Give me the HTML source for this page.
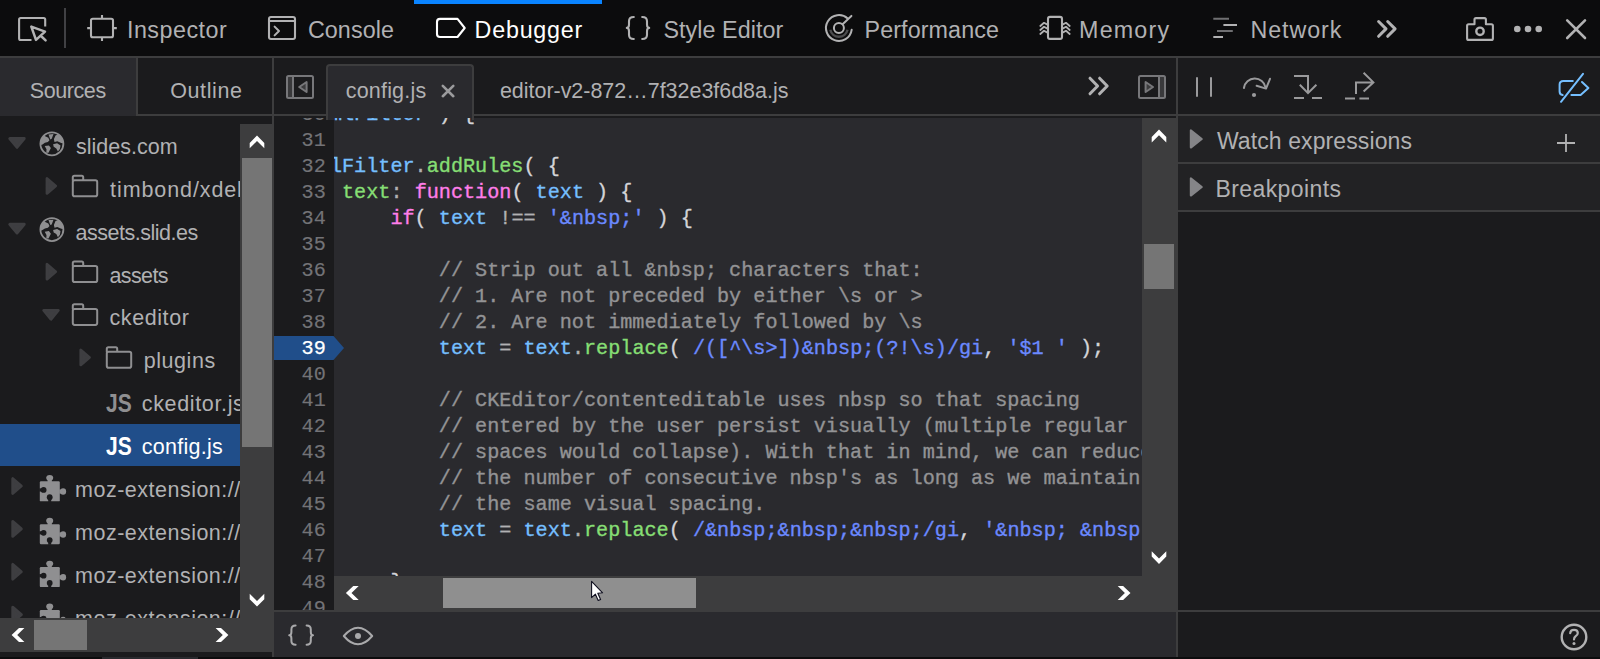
<!DOCTYPE html>
<html><head><meta charset="utf-8"><title>Debugger</title><style>
html,body{margin:0;padding:0;}
body{width:1600px;height:659px;position:relative;overflow:hidden;background:#1b1b1d;font-family:"Liberation Sans",sans-serif;}
.r{position:absolute;box-sizing:content-box;}
.t{position:absolute;white-space:pre;line-height:normal;font-family:"Liberation Sans",sans-serif;}
.m{position:absolute;white-space:pre;line-height:normal;font-family:"Liberation Mono",monospace;font-size:20.16px;-webkit-text-stroke:0.35px currentColor;}
</style></head><body>
<div class="r" style="left:0px;top:0px;width:1600px;height:56px;background:#0c0c0d;"></div>
<div class="r" style="left:0px;top:56px;width:1600px;height:2px;background:#3d3d3e;"></div>
<div class="r" style="left:414px;top:0px;width:188px;height:4px;background:#0a84ff;"></div>
<div class="r" style="left:64px;top:8px;width:2px;height:40px;background:#414144;"></div>
<div class="t " style="left:126.90px;top:17.03px;font-size:23.3px;color:#b1b1b3;letter-spacing:0.512px;">Inspector</div>
<div class="t " style="left:307.90px;top:17.03px;font-size:23.3px;color:#b1b1b3;letter-spacing:0.100px;">Console</div>
<div class="t " style="left:474.60px;top:17.03px;font-size:23.3px;color:#ffffff;letter-spacing:0.771px;">Debugger</div>
<div class="t " style="left:663.40px;top:17.03px;font-size:23.3px;color:#b1b1b3;letter-spacing:0.073px;">Style Editor</div>
<div class="t " style="left:864.50px;top:17.03px;font-size:23.3px;color:#b1b1b3;letter-spacing:0.110px;">Performance</div>
<div class="t " style="left:1079.10px;top:17.03px;font-size:23.3px;color:#b1b1b3;letter-spacing:1.160px;">Memory</div>
<div class="t " style="left:1250.40px;top:17.03px;font-size:23.3px;color:#b1b1b3;letter-spacing:0.917px;">Network</div>
<div class="r" style="left:0px;top:58px;width:1600px;height:58px;background:#1b1b1d;"></div>
<div class="r" style="left:0px;top:58px;width:136px;height:58px;background:#2a2a2e;"></div>
<div class="r" style="left:136px;top:58px;width:2px;height:58px;background:#3d3d3e;"></div>
<div class="r" style="left:138px;top:114px;width:1462px;height:2px;background:#3d3d3e;"></div>
<div class="t " style="left:29.70px;top:78.79px;font-size:21.5px;color:#b1b1b3;letter-spacing:-0.400px;">Sources</div>
<div class="t " style="left:170.20px;top:78.79px;font-size:21.5px;color:#b1b1b3;letter-spacing:0.617px;">Outline</div>
<div class="r" style="left:0px;top:116px;width:272px;height:541px;background:#1b1b1d;"></div>
<div class="r" style="left:0px;top:424px;width:240px;height:42px;background:#204e8a;"></div>
<div class="r" style="left:0px;top:116px;width:240px;height:502px;overflow:hidden;"><div class="t " style="left:75.90px;top:18.99px;font-size:21.5px;color:#b1b1b3;letter-spacing:0.022px;">slides.com</div></div>
<div class="r" style="left:0px;top:116px;width:240px;height:502px;overflow:hidden;"><div class="t " style="left:110.10px;top:61.86px;font-size:21.5px;color:#b1b1b3;letter-spacing:0.900px;">timbond/xdel</div></div>
<div class="r" style="left:0px;top:116px;width:240px;height:502px;overflow:hidden;"><div class="t " style="left:75.60px;top:104.73px;font-size:21.5px;color:#b1b1b3;letter-spacing:-0.492px;">assets.slid.es</div></div>
<div class="r" style="left:0px;top:116px;width:240px;height:502px;overflow:hidden;"><div class="t " style="left:109.50px;top:147.60px;font-size:21.5px;color:#b1b1b3;letter-spacing:-0.620px;">assets</div></div>
<div class="r" style="left:0px;top:116px;width:240px;height:502px;overflow:hidden;"><div class="t " style="left:109.50px;top:190.47px;font-size:21.5px;color:#b1b1b3;letter-spacing:0.586px;">ckeditor</div></div>
<div class="r" style="left:0px;top:116px;width:240px;height:502px;overflow:hidden;"><div class="t " style="left:143.70px;top:233.34px;font-size:21.5px;color:#b1b1b3;letter-spacing:0.567px;">plugins</div></div>
<div class="r" style="left:0px;top:116px;width:240px;height:502px;overflow:hidden;"><div class="t " style="left:141.80px;top:276.21px;font-size:21.5px;color:#b1b1b3;letter-spacing:0.640px;">ckeditor.js</div></div>
<div class="r" style="left:0px;top:116px;width:240px;height:502px;overflow:hidden;"><div class="t " style="left:141.80px;top:319.08px;font-size:21.5px;color:#ffffff;letter-spacing:0.263px;">config.js</div></div>
<div class="r" style="left:0px;top:116px;width:240px;height:502px;overflow:hidden;"><div class="t " style="left:75.10px;top:361.95px;font-size:21.5px;color:#b1b1b3;letter-spacing:0.493px;">moz-extension://</div></div>
<div class="r" style="left:0px;top:116px;width:240px;height:502px;overflow:hidden;"><div class="t " style="left:75.10px;top:404.82px;font-size:21.5px;color:#b1b1b3;letter-spacing:0.493px;">moz-extension://</div></div>
<div class="r" style="left:0px;top:116px;width:240px;height:502px;overflow:hidden;"><div class="t " style="left:75.10px;top:447.69px;font-size:21.5px;color:#b1b1b3;letter-spacing:0.493px;">moz-extension://</div></div>
<div class="r" style="left:0px;top:116px;width:240px;height:502px;overflow:hidden;"><div class="t " style="left:75.10px;top:490.56px;font-size:21.5px;color:#b1b1b3;letter-spacing:0.493px;">moz-extension://</div></div>
<div class="t" style="left:106.28px;top:388.16px;font-size:26.3px;font-weight:bold;color:#8f8f91;transform:scaleX(0.7987);transform-origin:0 0;">JS</div>
<div class="t" style="left:106.28px;top:431.03px;font-size:26.3px;font-weight:bold;color:#ffffff;transform:scaleX(0.7987);transform-origin:0 0;">JS</div>
<div class="r" style="left:240px;top:124px;width:34px;height:494px;background:#3d3d3e;"></div>
<div class="r" style="left:242px;top:158px;width:30px;height:289px;background:#757575;"></div>
<div class="r" style="left:0px;top:618px;width:274px;height:34px;background:#3d3d3e;"></div>
<div class="r" style="left:34px;top:620px;width:53px;height:30px;background:#757575;"></div>
<div class="r" style="left:272px;top:58px;width:2px;height:66px;background:#3d3d3e;"></div>
<div class="r" style="left:272px;top:652px;width:2px;height:5px;background:#3d3d3e;"></div>
<div class="r" style="left:1176px;top:58px;width:2px;height:599px;background:#3d3d3e;"></div>
<div class="r" style="left:274px;top:116px;width:902px;height:2px;background:#1b1b1d;"></div>
<div class="r" style="left:274px;top:118px;width:60px;height:492px;background:#1b1b1d;"></div>
<div class="r" style="left:334px;top:118px;width:808px;height:458px;background:#2a2a2e;"></div>
<div class="r" style="left:1142px;top:118px;width:36px;height:492px;background:#3d3d3e;"></div>
<div class="r" style="left:334px;top:576px;width:808px;height:34px;background:#3d3d3e;"></div>
<div class="r" style="left:274px;top:610px;width:902px;height:2px;background:#3d3d3e;"></div>
<div class="r" style="left:274px;top:612px;width:902px;height:45px;background:#2a2a2e;"></div>
<div class="r" style="left:1144px;top:244px;width:30px;height:45px;background:#757575;"></div>
<div class="r" style="left:443px;top:578px;width:253px;height:30px;background:#8f8f8f;"></div>
<div class="r" style="left:326px;top:64px;width:144px;height:54px;background:#2a2a2e;border:2px solid #3d3d3e;border-bottom:none;border-radius:4px 4px 0 0;"></div>
<div class="t " style="left:345.70px;top:78.79px;font-size:21.5px;color:#b1b1b3;letter-spacing:0.200px;">config.js</div>
<div class="t " style="left:499.90px;top:78.79px;font-size:21.5px;color:#b1b1b3;letter-spacing:-0.026px;">editor-v2-872…7f32e3f6d8a.js</div>
<div class="r" style="left:1178px;top:116px;width:422px;height:46px;background:#222224;"></div>
<div class="r" style="left:1178px;top:162px;width:422px;height:2px;background:#3d3d3e;"></div>
<div class="r" style="left:1178px;top:164px;width:422px;height:46px;background:#222224;"></div>
<div class="r" style="left:1178px;top:210px;width:422px;height:2px;background:#3d3d3e;"></div>
<div class="r" style="left:1178px;top:212px;width:422px;height:398px;background:#1b1b1d;"></div>
<div class="r" style="left:1178px;top:610px;width:422px;height:2px;background:#3d3d3e;"></div>
<div class="r" style="left:1178px;top:612px;width:422px;height:45px;background:#1b1b1d;"></div>
<div class="t " style="left:1216.90px;top:128.41px;font-size:23px;color:#b1b1b3;letter-spacing:0.100px;">Watch expressions</div>
<div class="t " style="left:1215.50px;top:176.31px;font-size:23px;color:#b1b1b3;letter-spacing:0.400px;">Breakpoints</div>
<div class="r" style="left:0px;top:657px;width:1600px;height:2px;background:#0c0c0d;"></div>
<div class="r" style="left:102px;top:657px;width:96px;height:2px;background:#2a2a2e;"></div>
<div class="r" style="left:334px;top:118px;width:808px;height:458px;overflow:hidden;">
<div class="m" style="left:-28.28px;top:-16.38px;line-height:26px;"><span style="color:#75bfff">htmlFilter</span><span style="color:#d4d4d8"> ) {</span></div>
<div class="m" style="left:-40.38px;top:35.62px;line-height:26px;"><span style="color:#75bfff">htmlFilter</span><span style="color:#b1b1b3">.</span><span style="color:#86de74">addRules</span><span style="color:#d4d4d8">( {</span></div>
<div class="m" style="left:8.02px;top:61.62px;line-height:26px;"><span style="color:#86de74">text</span><span style="color:#b1b1b3">:</span><span style="color:#d4d4d8"> </span><span style="color:#ff7de9">function</span><span style="color:#d4d4d8">( </span><span style="color:#75bfff">text</span><span style="color:#d4d4d8"> ) {</span></div>
<div class="m" style="left:56.41px;top:87.62px;line-height:26px;"><span style="color:#ff7de9">if</span><span style="color:#d4d4d8">( </span><span style="color:#75bfff">text</span><span style="color:#d4d4d8"> </span><span style="color:#b1b1b3">!==</span><span style="color:#d4d4d8"> </span><span style="color:#6b89ff">'&amp;nbsp;'</span><span style="color:#d4d4d8"> ) {</span></div>
<div class="m" style="left:104.80px;top:139.62px;line-height:26px;"><span style="color:#939395">// Strip out all &amp;nbsp; characters that:</span></div>
<div class="m" style="left:104.80px;top:165.62px;line-height:26px;"><span style="color:#939395">// 1. Are not preceded by either \s or &gt;</span></div>
<div class="m" style="left:104.80px;top:191.62px;line-height:26px;"><span style="color:#939395">// 2. Are not immediately followed by \s</span></div>
<div class="m" style="left:104.80px;top:217.62px;line-height:26px;"><span style="color:#75bfff">text</span><span style="color:#d4d4d8"> </span><span style="color:#b1b1b3">=</span><span style="color:#d4d4d8"> </span><span style="color:#75bfff">text</span><span style="color:#b1b1b3">.</span><span style="color:#86de74">replace</span><span style="color:#d4d4d8">( </span><span style="color:#6b89ff">/([^\s&gt;])&amp;nbsp;(?!\s)/gi</span><span style="color:#d4d4d8">,</span><span style="color:#d4d4d8"> </span><span style="color:#6b89ff">'$1 '</span><span style="color:#d4d4d8"> );</span></div>
<div class="m" style="left:104.80px;top:269.62px;line-height:26px;"><span style="color:#939395">// CKEditor/contenteditable uses nbsp so that spacing</span></div>
<div class="m" style="left:104.80px;top:295.62px;line-height:26px;"><span style="color:#939395">// entered by the user persist visually (multiple regular</span></div>
<div class="m" style="left:104.80px;top:321.62px;line-height:26px;"><span style="color:#939395">// spaces would collapse). With that in mind, we can reduce</span></div>
<div class="m" style="left:104.80px;top:347.62px;line-height:26px;"><span style="color:#939395">// the number of consecutive nbsp's as long as we maintain</span></div>
<div class="m" style="left:104.80px;top:373.62px;line-height:26px;"><span style="color:#939395">// the same visual spacing.</span></div>
<div class="m" style="left:104.80px;top:399.62px;line-height:26px;"><span style="color:#75bfff">text</span><span style="color:#d4d4d8"> </span><span style="color:#b1b1b3">=</span><span style="color:#d4d4d8"> </span><span style="color:#75bfff">text</span><span style="color:#b1b1b3">.</span><span style="color:#86de74">replace</span><span style="color:#d4d4d8">( </span><span style="color:#6b89ff">/&amp;nbsp;&amp;nbsp;&amp;nbsp;/gi</span><span style="color:#d4d4d8">,</span><span style="color:#d4d4d8"> </span><span style="color:#6b89ff">'&amp;nbsp; &amp;nbsp;'</span><span style="color:#d4d4d8"> );</span></div>
<div class="m" style="left:56.41px;top:451.62px;line-height:26px;"><span style="color:#d4d4d8">}</span></div>
</div>
<svg class="r" style="left:274px;top:336px;" width="72" height="24" viewBox="0 0 72 24"><path d="M0 0H59.5L70 12L59.5 24H0Z" fill="#204e8a"/></svg>
<div class="r" style="left:274px;top:118px;width:60px;height:492px;overflow:hidden;">
<div class="m" style="left:27.60px;top:-16.38px;line-height:26px;color:#737377;-webkit-text-stroke:0.15px currentColor;">30</div>
<div class="m" style="left:27.60px;top:9.62px;line-height:26px;color:#737377;-webkit-text-stroke:0.15px currentColor;">31</div>
<div class="m" style="left:27.60px;top:35.62px;line-height:26px;color:#737377;-webkit-text-stroke:0.15px currentColor;">32</div>
<div class="m" style="left:27.60px;top:61.62px;line-height:26px;color:#737377;-webkit-text-stroke:0.15px currentColor;">33</div>
<div class="m" style="left:27.60px;top:87.62px;line-height:26px;color:#737377;-webkit-text-stroke:0.15px currentColor;">34</div>
<div class="m" style="left:27.60px;top:113.62px;line-height:26px;color:#737377;-webkit-text-stroke:0.15px currentColor;">35</div>
<div class="m" style="left:27.60px;top:139.62px;line-height:26px;color:#737377;-webkit-text-stroke:0.15px currentColor;">36</div>
<div class="m" style="left:27.60px;top:165.62px;line-height:26px;color:#737377;-webkit-text-stroke:0.15px currentColor;">37</div>
<div class="m" style="left:27.60px;top:191.62px;line-height:26px;color:#737377;-webkit-text-stroke:0.15px currentColor;">38</div>
<div class="m" style="left:27.60px;top:217.62px;line-height:26px;color:#ffffff;-webkit-text-stroke:0.25px #fff;">39</div>
<div class="m" style="left:27.60px;top:243.62px;line-height:26px;color:#737377;-webkit-text-stroke:0.15px currentColor;">40</div>
<div class="m" style="left:27.60px;top:269.62px;line-height:26px;color:#737377;-webkit-text-stroke:0.15px currentColor;">41</div>
<div class="m" style="left:27.60px;top:295.62px;line-height:26px;color:#737377;-webkit-text-stroke:0.15px currentColor;">42</div>
<div class="m" style="left:27.60px;top:321.62px;line-height:26px;color:#737377;-webkit-text-stroke:0.15px currentColor;">43</div>
<div class="m" style="left:27.60px;top:347.62px;line-height:26px;color:#737377;-webkit-text-stroke:0.15px currentColor;">44</div>
<div class="m" style="left:27.60px;top:373.62px;line-height:26px;color:#737377;-webkit-text-stroke:0.15px currentColor;">45</div>
<div class="m" style="left:27.60px;top:399.62px;line-height:26px;color:#737377;-webkit-text-stroke:0.15px currentColor;">46</div>
<div class="m" style="left:27.60px;top:425.62px;line-height:26px;color:#737377;-webkit-text-stroke:0.15px currentColor;">47</div>
<div class="m" style="left:27.60px;top:451.62px;line-height:26px;color:#737377;-webkit-text-stroke:0.15px currentColor;">48</div>
<div class="m" style="left:27.60px;top:477.62px;line-height:26px;color:#737377;-webkit-text-stroke:0.15px currentColor;">49</div>
</div>
<svg class="r" style="left:14px;top:10px;" width="40" height="38" viewBox="14 10 40 38"><path d="M31.5 40H20.6Q19.1 40 19.1 38.5V19.5Q19.1 18 20.6 18H43.7Q45.2 18 45.2 19.5V26.5" stroke="#b2b2b3" stroke-width="2.1" fill="none" stroke-linecap="butt" stroke-linejoin="round"/><path d="M31.3 26.6L45 31.6L36 39.8Z M41 36L45.6 40.4" stroke="#b2b2b3" stroke-width="2.5" fill="none" stroke-linecap="round" stroke-linejoin="round"/></svg>
<svg class="r" style="left:84px;top:12px;" width="36" height="32" viewBox="84 12 36 32"><rect x="91" y="18.8" width="22" height="18.4" rx="1.8" fill="none" stroke="#b2b2b3" stroke-width="2.1"/><path d="M102 15V18.5M102 37.5V41M87.2 28.1H90.5M113.5 28.1H116.8" stroke="#b2b2b3" stroke-width="2.1" fill="none" stroke-linecap="butt" stroke-linejoin="round"/></svg>
<svg class="r" style="left:264px;top:12px;" width="36" height="32" viewBox="264 12 36 32"><rect x="269" y="17" width="26" height="22" rx="2" fill="none" stroke="#b2b2b3" stroke-width="2.1"/><path d="M269 21H295" stroke="#b2b2b3" stroke-width="2" fill="none" stroke-linecap="butt" stroke-linejoin="round"/><path d="M274.6 26.6L279 31L274.6 35.4" stroke="#b2b2b3" stroke-width="2" fill="none" stroke-linecap="round" stroke-linejoin="round"/></svg>
<svg class="r" style="left:432px;top:14px;" width="38" height="28" viewBox="432 14 38 28"><path d="M440 18.9H457.5L464.7 28L457.5 37H440Q437 37 437 34V21.9Q437 18.9 440 18.9Z" stroke="#ffffff" stroke-width="2.1" fill="none" stroke-linecap="round" stroke-linejoin="round"/></svg>
<svg class="r" style="left:622px;top:12px;" width="32" height="32" viewBox="622 12 32 32"><path d="M633.8 17Q629 17 629 21.3V24.6Q629 27.9 626.8 27.9Q629 27.9 629 31.4V34.7Q629 39 633.8 39" stroke="#b2b2b3" stroke-width="2.1" fill="none" stroke-linecap="round" stroke-linejoin="round"/><path d="M642.2 17Q647 17 647 21.3V24.6Q647 27.9 649.2 27.9Q647 27.9 647 31.4V34.7Q647 39 642.2 39" stroke="#b2b2b3" stroke-width="2.1" fill="none" stroke-linecap="round" stroke-linejoin="round"/></svg>
<svg class="r" style="left:822px;top:10px;" width="36" height="36" viewBox="822 10 36 36"><path d="M847.51 29.83A8.8 8.8 0 0 1 830.29 29.83" stroke="#4b4b4d" stroke-width="2.4" fill="none" stroke-linecap="butt" stroke-linejoin="round"/><path d="M847.70 18.57A12.9 12.9 0 1 0 851.67 29.80" stroke="#b2b2b3" stroke-width="2" fill="none" stroke-linecap="round" stroke-linejoin="round"/><circle cx="838.9" cy="28.0" r="5" fill="#0c0c0d" stroke="#b2b2b3" stroke-width="2"/><path d="M842.6 24.2L851.4 15.9" stroke="#b2b2b3" stroke-width="2" fill="none" stroke-linecap="round" stroke-linejoin="round"/></svg>
<svg class="r" style="left:1036px;top:12px;" width="38" height="32" viewBox="1036 12 38 32"><path d="M1040.3 26L1044 22.8L1047 24.4M1069.7 26L1066 22.8L1063 24.4M1040.3 30L1044 26.8L1047 28.4M1069.7 30L1066 26.8L1063 28.4M1040.3 34L1044 30.8L1047 32.4M1069.7 34L1066 30.8L1063 32.4" stroke="#b2b2b3" stroke-width="1.8" fill="none" stroke-linecap="round" stroke-linejoin="round"/><rect x="1048" y="16.9" width="14" height="22" rx="2" fill="#0c0c0d" stroke="#b2b2b3" stroke-width="2.1"/></svg>
<svg class="r" style="left:1210px;top:14px;" width="30" height="28" viewBox="1210 14 30 28"><path d="M1213.3 18.8H1229M1217 31H1232.8" stroke="#6f6f71" stroke-width="2" fill="none" stroke-linecap="butt" stroke-linejoin="round"/><path d="M1223.4 25H1237M1213.3 37H1223" stroke="#b2b2b3" stroke-width="2" fill="none" stroke-linecap="butt" stroke-linejoin="round"/></svg>
<svg class="r" style="left:1374px;top:16px;" width="26" height="26" viewBox="1374 16 26 26"><path d="M1378.6 21.5L1386 28.9L1378.6 36.3M1387.7 21.5L1395.1 28.9L1387.7 36.3" stroke="#b2b2b3" stroke-width="3" fill="none" stroke-linecap="round" stroke-linejoin="round"/></svg>
<svg class="r" style="left:1462px;top:13px;" width="36" height="32" viewBox="1462 13 36 32"><path d="M1474.5 24.2V19.6Q1474.5 18.1 1476 18.1H1484.4Q1485.9 18.1 1485.9 19.6V24.2H1491.4Q1492.9 24.2 1492.9 25.7V38.4Q1492.9 39.9 1491.4 39.9H1468.6Q1467.1 39.9 1467.1 38.4V25.7Q1467.1 24.2 1468.6 24.2Z" stroke="#b2b2b3" stroke-width="2.1" fill="none" stroke-linecap="round" stroke-linejoin="round"/><circle cx="1480" cy="31.3" r="3.7" fill="none" stroke="#b2b2b3" stroke-width="2.4"/></svg>
<svg class="r" style="left:1510px;top:22px;" width="34" height="14" viewBox="1510 22 34 14"><circle cx="1517.3" cy="29" r="3.3" fill="#b2b2b3"/><circle cx="1528" cy="29" r="3.3" fill="#b2b2b3"/><circle cx="1538.7" cy="29" r="3.3" fill="#b2b2b3"/></svg>
<svg class="r" style="left:1562px;top:16px;" width="28" height="26" viewBox="1562 16 28 26"><path d="M1567.2 20.4L1585 38M1585 20.4L1567.2 38" stroke="#b2b2b3" stroke-width="2.6" fill="none" stroke-linecap="round" stroke-linejoin="round"/></svg>
<svg class="r" style="left:284px;top:73px;" width="32" height="28" viewBox="284 73 32 28"><rect x="288" y="77" width="5" height="20" fill="#39393b"/><rect x="287" y="76" width="26" height="22" rx="1.5" fill="none" stroke="#77777a" stroke-width="2"/><path d="M293 76V98" stroke="#77777a" stroke-width="2" fill="none" stroke-linecap="butt" stroke-linejoin="round"/><path d="M299.2 87L306.6 82V92Z" stroke="#77777a" stroke-width="2" fill="#3c3c3e" stroke-linecap="round" stroke-linejoin="round"/></svg>
<svg class="r" style="left:438px;top:81px;" width="20" height="20" viewBox="438 81 20 20"><path d="M442.8 85.9L453.3 96.2M453.3 85.9L442.8 96.2" stroke="#9b9b9d" stroke-width="2.6" fill="none" stroke-linecap="round" stroke-linejoin="round"/></svg>
<svg class="r" style="left:1085px;top:73px;" width="28" height="26" viewBox="1085 73 28 26"><path d="M1090 78.2L1097.6 86L1090 93.8M1099.6 78.2L1107.2 86L1099.6 93.8" stroke="#b2b2b3" stroke-width="3" fill="none" stroke-linecap="round" stroke-linejoin="round"/></svg>
<svg class="r" style="left:1135px;top:73px;" width="34" height="28" viewBox="1135 73 34 28"><rect x="1160" y="77" width="5" height="20" fill="#39393b"/><rect x="1139" y="76" width="26" height="22" rx="1.5" fill="none" stroke="#77777a" stroke-width="2"/><path d="M1159 76V98" stroke="#77777a" stroke-width="2" fill="none" stroke-linecap="butt" stroke-linejoin="round"/><path d="M1153 87L1145.6 82V92Z" stroke="#77777a" stroke-width="2" fill="#3c3c3e" stroke-linecap="round" stroke-linejoin="round"/></svg>
<svg class="r" style="left:1192px;top:74px;" width="24" height="26" viewBox="1192 74 24 26"><path d="M1197 78V96M1211 78V96" stroke="#9a9a9c" stroke-width="2" fill="none" stroke-linecap="round" stroke-linejoin="round"/></svg>
<svg class="r" style="left:1240px;top:72px;" width="34" height="30" viewBox="1240 72 34 30"><path d="M1243.9 88A11 11 0 0 1 1265.6 87.6" stroke="#9a9a9c" stroke-width="2" fill="none" stroke-linecap="round" stroke-linejoin="round"/><path d="M1256.6 85.8L1266 88.6L1270 78.8" stroke="#9a9a9c" stroke-width="2" fill="none" stroke-linecap="round" stroke-linejoin="round"/><circle cx="1254" cy="95" r="2.1" fill="#9a9a9c"/></svg>
<svg class="r" style="left:1290px;top:72px;" width="36" height="30" viewBox="1290 72 36 30"><path d="M1294 76H1308V93M1299.8 84.8L1308 93.2L1316.4 84.8" stroke="#9a9a9c" stroke-width="2" fill="none" stroke-linecap="butt" stroke-linejoin="miter"/><path d="M1294 98H1304M1312 98H1322" stroke="#9a9a9c" stroke-width="2" fill="none" stroke-linecap="butt" stroke-linejoin="round"/></svg>
<svg class="r" style="left:1342px;top:68px;" width="36" height="34" viewBox="1342 68 36 34"><path d="M1356 94V82.4H1372M1363.6 72.8L1373.4 82.4L1363.6 91.6" stroke="#9a9a9c" stroke-width="2" fill="none" stroke-linecap="butt" stroke-linejoin="miter"/><path d="M1345 98.6H1355M1359.4 98.6H1369" stroke="#9a9a9c" stroke-width="2" fill="none" stroke-linecap="butt" stroke-linejoin="round"/></svg>
<svg class="r" style="left:1554px;top:70px;" width="40" height="36" viewBox="1554 70 40 36"><path d="M1572.8 81H1563.4Q1559.6 81 1559.6 84.6V91.4Q1559.6 94.6 1562.6 95" stroke="#75bfff" stroke-width="2" fill="none" stroke-linecap="round" stroke-linejoin="round"/><path d="M1571.4 95H1580.6L1588.4 88L1582 82" stroke="#75bfff" stroke-width="2" fill="none" stroke-linecap="round" stroke-linejoin="round"/><path d="M1561 101.8L1583 73.8" stroke="#75bfff" stroke-width="2" fill="none" stroke-linecap="round" stroke-linejoin="round"/></svg>
<svg class="r" style="left:0px;top:116px;" width="240" height="502" viewBox="0 116 240 502"><path d="M9.7 138.50000000000003H24.3L17 147.40000000000003Z" fill="#3e3e41" stroke="#3e3e41" stroke-width="2.8" stroke-linejoin="round"/><clipPath id="gc1"><circle cx="51.9" cy="143.8" r="11.6"/></clipPath><circle cx="51.9" cy="143.8" r="11.5" fill="none" stroke="#8f8f91" stroke-width="1.8"/><path d="M39.9 145.4L39.9 140.8L43.5 135.2L45.7 136.6L48.3 137.8L49.5 140.2L47.9 142.0L44.9 142.8L42.5 144.4Z" fill="#8f8f91" clip-path="url(#gc1)"/><path d="M48.5 134.4L53.5 134.0L51.7 138.8L50.3 139.4Z" fill="#8f8f91" clip-path="url(#gc1)"/><path d="M53.9 139.2L55.5 135.4L58.3 134.2L63.9 137.8L63.9 143.4L61.3 143.0L57.3 141.2L54.5 142.0Z" fill="#8f8f91" clip-path="url(#gc1)"/><path d="M44.7 146.0L48.9 145.4L50.9 148.0L48.5 152.8L46.3 152.8L46.5 149.2Z" fill="#8f8f91" clip-path="url(#gc1)"/><path d="M53.1 144.2L57.1 143.2L60.5 145.4L59.9 149.0L57.9 151.6L56.3 148.4L53.7 146.8Z" fill="#8f8f91" clip-path="url(#gc1)"/><path d="M47.0 178.47V193.47L55.7 185.97Z" fill="#3e3e41" stroke="#3e3e41" stroke-width="2.8" stroke-linejoin="round"/><path d="M72.8 180.67000000000002V177.27Q72.8 175.67000000000002 74.39999999999999 175.67000000000002H81.8Q83.2 175.67000000000002 83.2 177.27V180.27" fill="none" stroke="#8f8f91" stroke-width="2"/><rect x="72.8" y="180.27" width="24.4" height="16" rx="1.8" fill="none" stroke="#8f8f91" stroke-width="2"/><path d="M9.7 224.24000000000004H24.3L17 233.14000000000004Z" fill="#3e3e41" stroke="#3e3e41" stroke-width="2.8" stroke-linejoin="round"/><clipPath id="gc2"><circle cx="51.9" cy="229.54000000000002" r="11.6"/></clipPath><circle cx="51.9" cy="229.54000000000002" r="11.5" fill="none" stroke="#8f8f91" stroke-width="1.8"/><path d="M39.9 231.1L39.9 226.5L43.5 220.9L45.7 222.3L48.3 223.5L49.5 225.9L47.9 227.7L44.9 228.5L42.5 230.1Z" fill="#8f8f91" clip-path="url(#gc2)"/><path d="M48.5 220.1L53.5 219.7L51.7 224.5L50.3 225.1Z" fill="#8f8f91" clip-path="url(#gc2)"/><path d="M53.9 224.9L55.5 221.1L58.3 219.9L63.9 223.5L63.9 229.1L61.3 228.7L57.3 226.9L54.5 227.7Z" fill="#8f8f91" clip-path="url(#gc2)"/><path d="M44.7 231.7L48.9 231.1L50.9 233.7L48.5 238.5L46.3 238.5L46.5 234.9Z" fill="#8f8f91" clip-path="url(#gc2)"/><path d="M53.1 229.9L57.1 228.9L60.5 231.1L59.9 234.7L57.9 237.3L56.3 234.1L53.7 232.5Z" fill="#8f8f91" clip-path="url(#gc2)"/><path d="M47.0 264.21V279.21L55.7 271.71Z" fill="#3e3e41" stroke="#3e3e41" stroke-width="2.8" stroke-linejoin="round"/><path d="M72.8 266.40999999999997V263.01Q72.8 261.40999999999997 74.39999999999999 261.40999999999997H81.8Q83.2 261.40999999999997 83.2 263.01V266.01" fill="none" stroke="#8f8f91" stroke-width="2"/><rect x="72.8" y="266.01" width="24.4" height="16" rx="1.8" fill="none" stroke="#8f8f91" stroke-width="2"/><path d="M43.7 310.37999999999994H58.3L51 319.28Z" fill="#3e3e41" stroke="#3e3e41" stroke-width="2.8" stroke-linejoin="round"/><path d="M72.8 309.28V305.88Q72.8 304.28 74.39999999999999 304.28H81.8Q83.2 304.28 83.2 305.88V308.88" fill="none" stroke="#8f8f91" stroke-width="2"/><rect x="72.8" y="308.88" width="24.4" height="16" rx="1.8" fill="none" stroke="#8f8f91" stroke-width="2"/><path d="M80.80000000000001 349.95V364.95L89.5 357.45Z" fill="#3e3e41" stroke="#3e3e41" stroke-width="2.8" stroke-linejoin="round"/><path d="M106.8 352.15V348.75Q106.8 347.15 108.39999999999999 347.15H115.8Q117.2 347.15 117.2 348.75V351.75" fill="none" stroke="#8f8f91" stroke-width="2"/><rect x="106.8" y="351.75" width="24.4" height="16" rx="1.8" fill="none" stroke="#8f8f91" stroke-width="2"/><path d="M12.700000000000001 478.56V493.56L21.4 486.06Z" fill="#3e3e41" stroke="#3e3e41" stroke-width="2.8" stroke-linejoin="round"/><rect x="39.8" y="481.36" width="20" height="20" rx="1.2" fill="#8f8f91"/><ellipse cx="49.699999999999996" cy="477.86" rx="3.5" ry="2.9" fill="#8f8f91"/><rect x="47.599999999999994" y="478.86" width="4.2" height="3.5" fill="#8f8f91"/><ellipse cx="63.099999999999994" cy="491.56" rx="3" ry="3.3" fill="#8f8f91"/><rect x="59.3" y="489.56" width="3" height="4" fill="#8f8f91"/><circle cx="43.599999999999994" cy="489.96000000000004" r="2.9" fill="#1b1b1d"/><rect x="39.3" y="488.36" width="3" height="3.2" fill="#1b1b1d"/><circle cx="49.699999999999996" cy="497.16" r="2.9" fill="#1b1b1d"/><rect x="48.199999999999996" y="498.86" width="3" height="3" fill="#1b1b1d"/><path d="M12.700000000000001 521.4300000000001V536.4300000000001L21.4 528.9300000000001Z" fill="#3e3e41" stroke="#3e3e41" stroke-width="2.8" stroke-linejoin="round"/><rect x="39.8" y="524.23" width="20" height="20" rx="1.2" fill="#8f8f91"/><ellipse cx="49.699999999999996" cy="520.73" rx="3.5" ry="2.9" fill="#8f8f91"/><rect x="47.599999999999994" y="521.73" width="4.2" height="3.5" fill="#8f8f91"/><ellipse cx="63.099999999999994" cy="534.4300000000001" rx="3" ry="3.3" fill="#8f8f91"/><rect x="59.3" y="532.4300000000001" width="3" height="4" fill="#8f8f91"/><circle cx="43.599999999999994" cy="532.83" r="2.9" fill="#1b1b1d"/><rect x="39.3" y="531.23" width="3" height="3.2" fill="#1b1b1d"/><circle cx="49.699999999999996" cy="540.03" r="2.9" fill="#1b1b1d"/><rect x="48.199999999999996" y="541.73" width="3" height="3" fill="#1b1b1d"/><path d="M12.700000000000001 564.3000000000001V579.3000000000001L21.4 571.8000000000001Z" fill="#3e3e41" stroke="#3e3e41" stroke-width="2.8" stroke-linejoin="round"/><rect x="39.8" y="567.1" width="20" height="20" rx="1.2" fill="#8f8f91"/><ellipse cx="49.699999999999996" cy="563.6" rx="3.5" ry="2.9" fill="#8f8f91"/><rect x="47.599999999999994" y="564.6" width="4.2" height="3.5" fill="#8f8f91"/><ellipse cx="63.099999999999994" cy="577.3000000000001" rx="3" ry="3.3" fill="#8f8f91"/><rect x="59.3" y="575.3000000000001" width="3" height="4" fill="#8f8f91"/><circle cx="43.599999999999994" cy="575.7" r="2.9" fill="#1b1b1d"/><rect x="39.3" y="574.1" width="3" height="3.2" fill="#1b1b1d"/><circle cx="49.699999999999996" cy="582.9" r="2.9" fill="#1b1b1d"/><rect x="48.199999999999996" y="584.6" width="3" height="3" fill="#1b1b1d"/><path d="M12.700000000000001 607.1700000000001V622.1700000000001L21.4 614.6700000000001Z" fill="#3e3e41" stroke="#3e3e41" stroke-width="2.8" stroke-linejoin="round"/><rect x="39.8" y="609.97" width="20" height="20" rx="1.2" fill="#8f8f91"/><ellipse cx="49.699999999999996" cy="606.47" rx="3.5" ry="2.9" fill="#8f8f91"/><rect x="47.599999999999994" y="607.47" width="4.2" height="3.5" fill="#8f8f91"/><ellipse cx="63.099999999999994" cy="620.1700000000001" rx="3" ry="3.3" fill="#8f8f91"/><rect x="59.3" y="618.1700000000001" width="3" height="4" fill="#8f8f91"/><circle cx="43.599999999999994" cy="618.57" r="2.9" fill="#1b1b1d"/><rect x="39.3" y="616.97" width="3" height="3.2" fill="#1b1b1d"/><circle cx="49.699999999999996" cy="625.77" r="2.9" fill="#1b1b1d"/><rect x="48.199999999999996" y="627.47" width="3" height="3" fill="#1b1b1d"/></svg>
<svg class="r" style="left:240px;top:124px;" width="34" height="494" viewBox="240 124 34 494"><path d="M257 135.5L264.3 142.9V148.3L257 141.1L249.7 148.3V142.9Z" fill="#ffffff"/><path d="M257 606.6L264.3 599.2V593.8000000000001L257 601.0L249.7 593.8000000000001V599.2Z" fill="#ffffff"/></svg>
<svg class="r" style="left:0px;top:618px;" width="274" height="34" viewBox="0 618 274 34"><path d="M11.6 635L19.0 627.9H24.4L17.2 635L24.4 642.1H19.0Z" fill="#ffffff"/><path d="M228.4 635L221.0 627.9H215.6L222.8 635L215.6 642.1H221.0Z" fill="#ffffff"/></svg>
<svg class="r" style="left:1142px;top:118px;" width="36" height="458" viewBox="1142 118 36 458"><path d="M1159 129.6L1166.3 137.0V142.4L1159 135.2L1151.7 142.4V137.0Z" fill="#ffffff"/><path d="M1159 564L1166.3 556.6V551.2L1159 558.4L1151.7 551.2V556.6Z" fill="#ffffff"/></svg>
<svg class="r" style="left:334px;top:576px;" width="808" height="34" viewBox="334 576 808 34"><path d="M345.9 593L353.29999999999995 585.9H358.7L351.5 593L358.7 600.1H353.29999999999995Z" fill="#ffffff"/><path d="M1130.5 593L1123.1 585.9H1117.7L1124.9 593L1117.7 600.1H1123.1Z" fill="#ffffff"/></svg>
<svg class="r" style="left:1186px;top:126px;" width="20" height="74" viewBox="1186 126 20 74"><path d="M1190.8 130.4V147.6L1201.8 139Z" fill="#858588" stroke="#858588" stroke-width="2" stroke-linejoin="round"/><path d="M1190.8 178.4V195.6L1201.8 187Z" fill="#858588" stroke="#858588" stroke-width="2" stroke-linejoin="round"/></svg>
<svg class="r" style="left:1554px;top:130px;" width="24" height="24" viewBox="1554 130 24 24"><path d="M1566 134V152M1557 143H1575" stroke="#b2b2b3" stroke-width="1.8" fill="none" stroke-linecap="butt" stroke-linejoin="round"/></svg>
<svg class="r" style="left:284px;top:620px;" width="36" height="30" viewBox="284 620 36 30"><path d="M295.6 625.6Q291.4 625.6 291.4 629.4V632Q291.4 635.2 289.2 635.2Q291.4 635.2 291.4 638.4V641Q291.4 644.8 295.6 644.8" stroke="#a9a9ab" stroke-width="2" fill="none" stroke-linecap="round" stroke-linejoin="round"/><path d="M306.6 625.6Q310.8 625.6 310.8 629.4V632Q310.8 635.2 313 635.2Q310.8 635.2 310.8 638.4V641Q310.8 644.8 306.6 644.8" stroke="#a9a9ab" stroke-width="2" fill="none" stroke-linecap="round" stroke-linejoin="round"/></svg>
<svg class="r" style="left:340px;top:622px;" width="38" height="28" viewBox="340 622 38 28"><path d="M343.8 636Q358 619.4 372.2 636Q358 652.6 343.8 636Z" stroke="#a9a9ab" stroke-width="2" fill="none" stroke-linecap="round" stroke-linejoin="round"/><circle cx="358" cy="636" r="3" fill="#a9a9ab"/></svg>
<svg class="r" style="left:1558px;top:621px;" width="32" height="32" viewBox="1558 621 32 32"><circle cx="1574" cy="637" r="12.3" fill="none" stroke="#b2b2b3" stroke-width="2.4"/><path d="M1570.2 633.2Q1570.4 629.8 1574 629.8Q1577.8 629.8 1577.8 633Q1577.8 635 1575.6 636.2Q1574 637.2 1574 639.4" stroke="#b2b2b3" stroke-width="2.2" fill="none" stroke-linecap="round" stroke-linejoin="round"/><circle cx="1574" cy="643.4" r="1.5" fill="#b2b2b3"/></svg>
<svg class="r" style="left:588px;top:578px;" width="18" height="26" viewBox="588 578 18 26"><path d="M591.6 581.4V597.6L595.4 594.2L598.2 600.4L600.6 599.4L597.8 593.2L602.6 592.8Z" fill="#ffffff" stroke="#101020" stroke-width="1.1" stroke-linejoin="round"/></svg>
</body></html>
